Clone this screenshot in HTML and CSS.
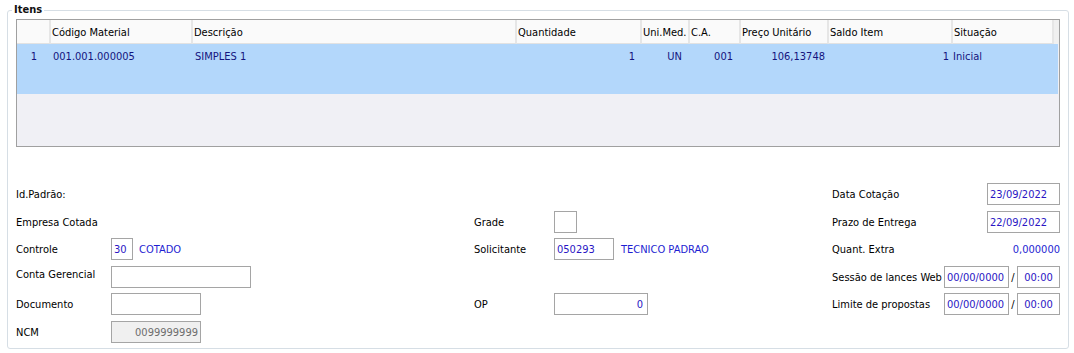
FILE: index.html
```html
<!DOCTYPE html>
<html lang="pt-BR">
<head>
<meta charset="utf-8">
<title>Itens</title>
<link rel="stylesheet" href="styles.css">
</head>
<body>
<fieldset class="box">
  <legend class="box-title">Itens</legend>
  <div class="grid">
    <div class="grid-head">
      <div class="cell c0"></div>
      <div class="cell c1">Código Material</div>
      <div class="cell c2">Descrição</div>
      <div class="cell c3">Quantidade</div>
      <div class="cell c4">Uni.Med.</div>
      <div class="cell c5">C.A.</div>
      <div class="cell c6">Preço Unitário</div>
      <div class="cell c7">Saldo Item</div>
      <div class="cell c8">Situação</div>
    </div>
    <div class="grid-row">
      <div class="cell c0 center">1</div>
      <div class="cell c1 pl">001.001.000005</div>
      <div class="cell c2 pl">SIMPLES 1</div>
      <div class="cell c3 num pr7">1</div>
      <div class="cell c4 num pr8">UN</div>
      <div class="cell c5 num pr8">001</div>
      <div class="cell c6 num pr4">106,13748</div>
      <div class="cell c7 num pr4">1</div>
      <div class="cell c8">Inicial</div>
    </div>
    <div class="grid-empty"></div>
  </div>

  <div class="form">
    <!-- row 1 -->
    <div class="field"><span class="label">Id.Padrão:</span></div>
    <div class="field"></div>
    <div class="field"><span class="label grow">Data Cotação</span><span class="input w73">23/09/2022</span></div>
    <!-- row 2 -->
    <div class="field"><span class="label">Empresa Cotada</span></div>
    <div class="field"><span class="label lw80">Grade</span><span class="input w23"></span></div>
    <div class="field"><span class="label grow">Prazo de Entrega</span><span class="input w73">22/09/2022</span></div>
    <!-- row 3 -->
    <div class="field"><span class="label lw95">Controle</span><span class="input w22">30</span><span class="value ml6">COTADO</span></div>
    <div class="field"><span class="label lw80">Solicitante</span><span class="input w60">050293</span><span class="value ml7">TECNICO PADRAO</span></div>
    <div class="field"><span class="label grow">Quant. Extra</span><span class="value">0,000000</span></div>
    <!-- row 4 -->
    <div class="field"><span class="label lw95 up">Conta Gerencial</span><span class="input w140"></span></div>
    <div class="field"></div>
    <div class="field"><span class="label grow">Sessão de lances Web</span><span class="input w65">00/00/0000</span><span class="slash">/</span><span class="input w43 center">00:00</span></div>
    <!-- row 5 -->
    <div class="field"><span class="label lw95">Documento</span><span class="input w90"></span></div>
    <div class="field"><span class="label lw80">OP</span><span class="input w94 right">0</span></div>
    <div class="field"><span class="label grow">Limite de propostas</span><span class="input w65">00/00/0000</span><span class="slash">/</span><span class="input w43 center">00:00</span></div>
    <!-- row 6 -->
    <div class="field"><span class="label lw95">NCM</span><span class="input w90 right disabled">0099999999</span></div>
    <div class="field"></div>
    <div class="field"></div>
  </div>
</fieldset>
</body>
</html>
```

FILE: styles.css
```css
html, body {
  margin: 0;
  padding: 0;
  background: #ffffff;
}

body {
  font-family: "DejaVu Sans Condensed", "Liberation Sans", sans-serif;
  font-stretch: condensed;
  font-size: 11px;
  color: #000000;
  width: 1074px;
  height: 353px;
  overflow: hidden;
}

.box {
  margin: 4px 5px 0 7px;
  padding: 3px 8px 5px 8px;
  border: 1px solid #d6dee5;
  border-radius: 3px;
  min-width: 0;
}

.box-title {
  font-weight: bold;
  font-size: 11px;
  line-height: 12px;
  padding: 0 2px;
  margin-left: -4px;
  color: #111111;
}

/* ---------- grid ---------- */
.grid {
  border: 1px solid #a0a0a0;
  background: #f0f0f5;
  display: flex;
  flex-direction: column;
}

.grid-head {
  display: flex;
  height: 24px;
  background: #f0f0f0;
}

.grid-head .cell {
  background: #fafafa;
  border-right: 2px solid #e6e6e6;
  border-bottom: 1px solid #e2e2e2;
  padding-top: 3px;
  line-height: 20px;
  padding-left: 1px;
}

.grid-row {
  display: flex;
  height: 50px;
  background: #b3d7fb;
  color: #14147e;
  margin-right: 1px;
}

.grid-row .cell {
  padding-top: 6px;
  line-height: 13px;
}

.grid-empty {
  height: 52px;
}

.cell {
  box-sizing: border-box;
  white-space: nowrap;
  overflow: hidden;
  flex: none;
}

.c0 { width: 34px; }
.c1 { width: 142px; }
.c2 { width: 324px; }
.c3 { width: 125px; }
.c4 { width: 48px; }
.c5 { width: 51px; }
.c6 { width: 88px; }
.c7 { width: 124px; }
.c8 { width: 101px; }

.center { text-align: center; }
.pl { padding-left: 2px; }
.num { text-align: right; }
.pr4 { padding-right: 4px; }
.pr7 { padding-right: 7px; }
.pr8 { padding-right: 8px; }

/* ---------- form ---------- */
.form {
  margin-top: 36px;
  display: grid;
  grid-template-columns: 458px 358px 228px;
  grid-template-rows: repeat(6, 22px);
  row-gap: 5.6px;
}

.field {
  display: flex;
  align-items: center;
  height: 22px;
}

.label {
  flex: none;
  white-space: nowrap;
  padding-top: 1px;
}

.label.grow { flex: 1; }
.lw95 { width: 95px; }
.lw80 { width: 80px; }
.up { align-self: flex-start; padding-top: 2px; }

.input {
  box-sizing: border-box;
  height: 22px;
  border: 1px solid #a5a5a5;
  background: #ffffff;
  color: #2a16c4;
  line-height: 21px;
  padding: 0 2px;
  white-space: nowrap;
  flex: none;
}

.input.right { text-align: right; padding-right: 4px; }
.input.center { text-align: center; }
.input.disabled {
  background: #f0f0f0;
  color: #6d6d6d;
  padding-right: 2px;
}

.w22 { width: 22px; }
.w23 { width: 23px; }
.w43 { width: 43px; }
.w60 { width: 60px; }
.w65 { width: 65px; }
.w73 { width: 73px; }
.w90 { width: 90px; }
.w94 { width: 94px; }
.w140 { width: 140px; }

.value {
  color: #1e1ed2;
  white-space: nowrap;
  padding-top: 1px;
}

.ml6 { margin-left: 6px; }
.ml7 { margin-left: 7px; }

.slash {
  width: 8px;
  text-align: center;
  flex: none;
  padding-top: 1px;
}
```
